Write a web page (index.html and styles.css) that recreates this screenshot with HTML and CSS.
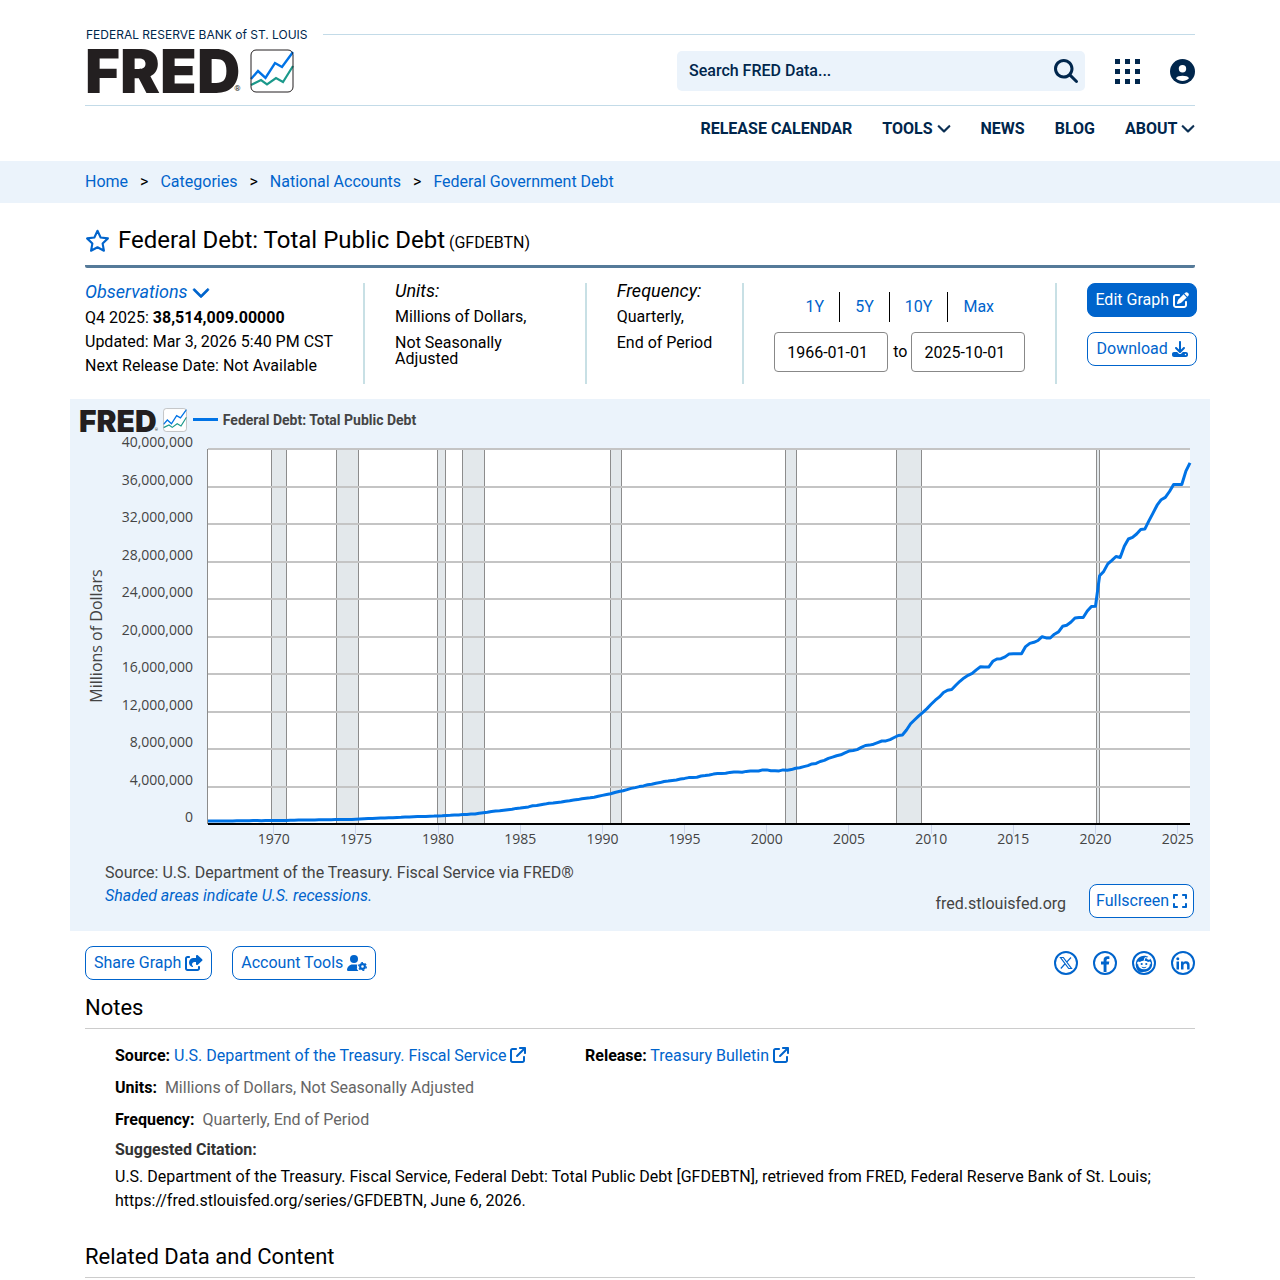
FILE: index.html
```html
<!DOCTYPE html>
<html lang="en">
<head>
    <meta charset="UTF-8">
    <meta name="viewport" content="width=device-width, initial-scale=1.0">
    <title>Federal Debt: Total Public Debt (GFDEBTN) | FRED | St. Louis Fed</title>
    <link rel="stylesheet" href="styles.css">
</head>
<body>

    <!-- shared icons -->
    <svg class="sprite" aria-hidden="true">
        <symbol id="chevron" viewBox="0 0 512 512"><path stroke="currentColor" stroke-width="20" d="M233.4 406.6c12.5 12.5 32.8 12.5 45.3 0l192-192c12.5-12.5 12.5-32.8 0-45.3s-32.8-12.5-45.3 0L256 338.7 86.6 169.4c-12.5-12.5-32.8-12.5-45.3 0s-12.5 32.8 0 45.3l192 192z"/></symbol>
        <symbol id="external" viewBox="0 0 512 512"><path d="M320 0c-17.7 0-32 14.3-32 32s14.3 32 32 32h82.7L201.4 265.4c-12.5 12.5-12.5 32.8 0 45.3s32.8 12.5 45.3 0L448 109.3V192c0 17.7 14.3 32 32 32s32-14.3 32-32V32c0-17.7-14.3-32-32-32H320zM80 32C35.8 32 0 67.8 0 112V432c0 44.2 35.8 80 80 80H400c44.2 0 80-35.8 80-80V320c0-17.7-14.3-32-32-32s-32 14.3-32 32V432c0 8.8-7.2 16-16 16H80c-8.8 0-16-7.2-16-16V112c0-8.8 7.2-16 16-16H192c17.7 0 32-14.3 32-32s-14.3-32-32-32H80z"/></symbol>
        <symbol id="chart-mark" viewBox="0 0 44 44">
            <rect x="1" y="1" width="42" height="42" rx="5" fill="#fff"/>
            <path d="M1 36 L11 31 L17 35.5 L26 29 L33 33 L43 17" fill="none" stroke="#1b998b" stroke-width="2.2"/>
            <path d="M1 30 L8 22 L15.5 29 L25 14 L32 18 L43 3" fill="none" stroke="#0073e6" stroke-width="2.4"/>
            <rect x="1" y="1" width="42" height="42" rx="5" fill="none" stroke="currentColor"/>
        </symbol>
    </svg>

    <header class="container">
        <div class="bank-row">
            <span class="bank-name">FEDERAL RESERVE BANK of ST. LOUIS</span>
            <span class="bank-line"></span>
        </div>
        <div class="brand-row">
            <a class="logo" href="#" aria-label="FRED home">
                <span class="logo-text">FRED</span><span class="logo-reg">®</span>
                <svg class="logo-mark"><use href="#chart-mark"/></svg>
            </a>
            <form class="search">
                <input type="text" placeholder="Search FRED Data..." aria-label="Search FRED Data">
                <button type="button" aria-label="Search">
                    <svg viewBox="0 0 512 512"><path d="M416 208c0 45.9-14.9 88.3-40 122.7L502.6 457.4c12.5 12.5 12.5 32.8 0 45.3s-32.8 12.5-45.3 0L330.7 376c-34.4 25.2-76.8 40-122.7 40C93.1 416 0 322.9 0 208S93.1 0 208 0S416 93.1 416 208zM208 352a144 144 0 1 0 0-288 144 144 0 1 0 0 288z"/></svg>
                </button>
            </form>
            <button class="icon-btn" type="button" aria-label="Apps">
                <svg viewBox="0 0 25 25"><path d="M0 0h5v5H0zM10 0h5v5h-5zM20 0h5v5h-5zM0 10h5v5H0zM10 10h5v5h-5zM20 10h5v5h-5zM0 20h5v5H0zM10 20h5v5h-5zM20 20h5v5h-5z"/></svg>
            </button>
            <button class="icon-btn" type="button" aria-label="My account">
                <svg viewBox="0 0 25 25"><circle cx="12.5" cy="12.5" r="12.5"/><circle cx="12.5" cy="9.8" r="3.7" fill="#fff"/><path d="M6 19.2C7.5 16 17.5 16 19 19.2C15.5 22.8 9.5 22.8 6 19.2z" fill="#fff"/></svg>
            </button>
        </div>
        <nav class="main-nav">
            <a href="#">RELEASE CALENDAR</a>
            <a href="#">TOOLS <svg><use href="#chevron"/></svg></a>
            <a href="#">NEWS</a>
            <a href="#">BLOG</a>
            <a href="#">ABOUT <svg><use href="#chevron"/></svg></a>
        </nav>
    </header>

    <div class="breadcrumb">
        <div class="container">
            <a href="#">Home</a><span>&gt;</span><a href="#">Categories</a><span>&gt;</span><a href="#">National Accounts</a><span>&gt;</span><a href="#">Federal Government Debt</a>
        </div>
    </div>

    <main class="container">
        <div class="title-row">
            <button class="star" type="button" aria-label="Add to favorites">
                <svg viewBox="0 0 24 24"><path d="M12 1.700l3 6.400 7 .9-5.100 4.900 1.300 7L12 17.500l-6.200 3.400 1.300-7L2 9l7-.9z" fill="none" stroke="#0064cc" stroke-width="2" stroke-linejoin="round"/></svg>
            </button>
            <h1>Federal Debt: Total Public Debt <small>(GFDEBTN)</small></h1>
        </div>

        <div class="meta">
            <section class="observations">
                <a class="meta-label" href="#">Observations <svg><use href="#chevron"/></svg></a>
                <p>Q4 2025: <b>38,514,009.00000</b></p>
                <p>Updated: Mar 3, 2026 5:40 PM CST</p>
                <p>Next Release Date: Not Available</p>
            </section>
            <section class="units">
                <div class="meta-label">Units:</div>
                <p>Millions of Dollars,</p>
                <p>Not Seasonally Adjusted</p>
            </section>
            <section class="frequency">
                <div class="meta-label">Frequency:</div>
                <p>Quarterly,</p>
                <p>End of Period</p>
            </section>
            <section class="range">
                <div class="range-links">
                    <a href="#">1Y</a><a href="#">5Y</a><a href="#">10Y</a><a href="#">Max</a>
                </div>
                <div class="range-dates">
                    <input type="text" id="start" value="1966-01-01" aria-label="Start date">
                    <label for="end">to</label>
                    <input type="text" id="end" value="2025-10-01">
                </div>
            </section>
            <section class="actions">
                <button class="btn btn-primary" type="button">Edit Graph
                    <svg viewBox="0 0 512 512"><path d="M471.6 21.7c-21.9-21.9-57.3-21.9-79.2 0L362.3 51.7l97.9 97.9 30.1-30.1c21.9-21.9 21.9-57.3 0-79.2L471.6 21.7zm-299.2 220c-6.1 6.1-10.8 13.6-13.5 21.9l-29.6 88.8c-2.9 8.6-.6 18.1 5.8 24.6s15.9 8.7 24.6 5.8l88.8-29.6c8.2-2.7 15.7-7.4 21.9-13.5L437.7 172.3 339.7 74.3 172.4 241.7zM96 64C43 64 0 107 0 160V416c0 53 43 96 96 96H352c53 0 96-43 96-96V320c0-17.7-14.3-32-32-32s-32 14.3-32 32v96c0 17.7-14.3 32-32 32H96c-17.7 0-32-14.3-32-32V160c0-17.7 14.3-32 32-32h96c17.7 0 32-14.3 32-32s-14.3-32-32-32H96z"/></svg>
                </button>
                <button class="btn" type="button">Download
                    <svg viewBox="0 0 512 512"><path d="M288 32c0-17.7-14.3-32-32-32s-32 14.3-32 32V274.7l-73.4-73.4c-12.5-12.5-32.8-12.5-45.3 0s-12.5 32.8 0 45.3l128 128c12.5 12.5 32.8 12.5 45.3 0l128-128c12.5-12.5 12.5-32.8 0-45.3s-32.8-12.5-45.3 0L288 274.7V32zM64 352c-35.3 0-64 28.7-64 64v32c0 35.3 28.7 64 64 64H448c35.3 0 64-28.7 64-64V416c0-35.3-28.7-64-64-64H346.5l-45.3 45.3c-25 25-65.5 25-90.5 0L165.5 352H64zm368 56a24 24 0 1 1 0 48 24 24 0 1 1 0-48z"/></svg>
                </button>
            </section>
        </div>

        <div class="graph">
            <div class="legend">
                <span class="logo logo-small">
                    <span class="logo-text">FRED</span><span class="logo-reg">®</span>
                    <svg class="logo-mark"><use href="#chart-mark"/></svg>
                </span>
                <span class="legend-line"></span>
                <span class="legend-name">Federal Debt: Total Public Debt</span>
            </div>
            <svg id="chart" class="chart" viewBox="0 0 1140 420" role="img" aria-label="Line chart of total public debt"></svg>
            <div class="graph-footer">
                <div class="graph-source">
                    <p>Source: U.S. Department of the Treasury. Fiscal Service via FRED®</p>
                    <p><a href="#">Shaded areas indicate U.S. recessions.</a></p>
                </div>
                <span class="graph-site">fred.stlouisfed.org</span>
                <button class="btn btn-full" type="button">Fullscreen
                    <svg viewBox="0 0 448 512"><path d="M32 32C14.3 32 0 46.3 0 64v96c0 17.7 14.3 32 32 32s32-14.3 32-32V96h64c17.7 0 32-14.3 32-32s-14.3-32-32-32H32zM64 352c0-17.7-14.3-32-32-32s-32 14.3-32 32v96c0 17.7 14.3 32 32 32h96c17.7 0 32-14.3 32-32s-14.3-32-32-32H64V352zM320 32c-17.7 0-32 14.3-32 32s14.3 32 32 32h64v64c0 17.7 14.3 32 32 32s32-14.3 32-32V64c0-17.7-14.3-32-32-32H320zM448 352c0-17.7-14.3-32-32-32s-32 14.3-32 32v64H320c-17.7 0-32 14.3-32 32s14.3 32 32 32h96c17.7 0 32-14.3 32-32V352z"/></svg>
                </button>
            </div>
        </div>

        <div class="tools">
            <button class="btn" type="button">Share Graph
                <svg class="wide" viewBox="0 0 576 512"><path d="M352 224H305.5c-45 0-81.5 36.5-81.5 81.5c0 22.3 10.3 34.3 19.2 40.5c6.8 4.7 12.8 12 12.8 20.3c0 9.8-8 17.8-17.8 17.8h-2.5c-2.4 0-4.8-.4-7.1-1.4C210.8 374.8 128 333.4 128 240c0-79.5 64.5-144 144-144h80V34.7C352 15.5 367.5 0 386.7 0c8.6 0 16.8 3.2 23.2 8.9L548.1 133.3c7.6 6.8 11.9 16.5 11.9 26.7s-4.3 19.9-11.9 26.7l-139 125.1c-5.9 5.3-13.5 8.2-21.4 8.2H384c-17.7 0-32-14.3-32-32V224zM80 96c-8.8 0-16 7.2-16 16V432c0 8.8 7.2 16 16 16H400c8.8 0 16-7.2 16-16V384c0-17.7 14.3-32 32-32s32 14.3 32 32v48c0 44.2-35.8 80-80 80H80c-44.2 0-80-35.8-80-80V112C0 67.8 35.8 32 80 32h48c17.7 0 32 14.3 32 32s-14.3 32-32 32H80z"/></svg>
            </button>
            <button class="btn" type="button">Account Tools
                <svg class="wider" viewBox="0 0 640 512">
                    <circle cx="224" cy="128" r="128"/>
                    <path d="M178 304h92c22 0 42 4 61 11c-18 24-20 48-6 73c-16 32-10 65 17 88c8 9 15 20 24 36H30c-17 0-30-13-30-30C0 384 80 304 178 304z"/>
                    <circle cx="496" cy="368" r="76" fill="none" stroke="currentColor" stroke-width="68"/>
                    <circle cx="496" cy="368" r="124" fill="none" stroke="currentColor" stroke-width="38" stroke-dasharray="65 64.85"/>
                </svg>
            </button>
            <div class="social">
                <a href="#" aria-label="Share on X"><svg viewBox="0 0 24 24"><circle cx="12" cy="12" r="11"/><path d="M6.500 6.500h2.800l8.200 11h-2.800zM17 6.500l-4.300 4.700M6.800 17.500l4.500-5" stroke-width="1.200"/></svg></a>
                <a href="#" aria-label="Share on Facebook"><svg viewBox="0 0 24 24"><circle cx="12" cy="12" r="11"/><path class="solid" d="M10.600 21v-7.500H8v-3h2.600V9c0-2.600 1.500-3.800 3.800-3.800.9 0 1.600.1 2 .2v2.600h-1.400c-1.200 0-1.500.6-1.500 1.500v1h2.800l-.5 3h-2.300V21z"/></svg></a>
                <a href="#" aria-label="Share on Reddit"><svg viewBox="0 0 24 24"><circle cx="12" cy="12" r="11"/><path class="solid" d="M5 18.500C2 13 4.500 5 12 4.800c2 0 3.500.5 4.800 1.500 4.800 3.500 4.500 11.200-.8 13.800-3 1.300-6 1-9 .6z"/><circle class="hole" cx="16.800" cy="7.200" r="1.600"/><path d="M12 10l1-3.400 3 .6" stroke="#fff" stroke-width="1"/><circle class="hole" cx="6.700" cy="12" r="1.600"/><circle class="hole" cx="17.300" cy="12" r="1.600"/><ellipse class="hole" cx="12" cy="14" rx="5.800" ry="4.200"/><circle class="solid" cx="9.700" cy="13" r="1.100"/><circle class="solid" cx="14.300" cy="13" r="1.100"/><path d="M9.800 16c1.300 1 3.100 1 4.400 0" stroke-width="1"/></svg></a>
                <a href="#" aria-label="Share on LinkedIn"><svg viewBox="0 0 24 24"><circle cx="12" cy="12" r="11"/><path class="solid" d="M5.500 10.500H8v8H5.500zM10 10.500h2.400v1.200c.5-.9 1.500-1.400 2.600-1.400 2.800 0 3.600 1.700 3.600 3.900v4.300h-2.500v-3.900c0-1-.3-2.200-1.600-2.200s-2 1-2 2.100v4H10z"/><circle class="solid" cx="6.800" cy="7.800" r="1.500"/></svg></a>
            </div>
        </div>

        <h2>Notes</h2>
        <div class="notes">
            <div class="notes-row">
                <p><b>Source:</b> <a href="#">U.S. Department of the Treasury. Fiscal Service <svg><use href="#external"/></svg></a></p>
                <p><b>Release:</b> <a href="#">Treasury Bulletin <svg><use href="#external"/></svg></a></p>
            </div>
            <p class="grey"><b>Units:</b>Millions of Dollars, Not Seasonally Adjusted</p>
            <p class="grey"><b>Frequency:</b>Quarterly, End of Period</p>
            <h3>Suggested Citation:</h3>
            <p class="citation">U.S. Department of the Treasury. Fiscal Service, Federal Debt: Total Public Debt [GFDEBTN], retrieved from FRED, Federal Reserve Bank of St. Louis; https://fred.stlouisfed.org/series/GFDEBTN, June 6, 2026.</p>
        </div>

        <h2>Related Data and Content</h2>
    </main>

    <script src="script.js"></script>
</body>
</html>
```
FILE: styles.css
```css
* {
    box-sizing: border-box;
    margin: 0;
    padding: 0;
}

body {
    font-family: Roboto, "Liberation Sans", sans-serif;
    font-size: 16px;
    line-height: 24px;
    color: #000;
    background-color: #fff;
}

a {
    color: #0064cc;
    text-decoration: none;
}

button, input {
    font: inherit;
}

button {
    cursor: pointer;
}

svg {
    fill: currentColor;
}

.sprite {
    display: none;
}

.container {
    max-width: 1140px;
    margin: 0 auto;
    padding: 0 15px;
}

/* Header */
.bank-row {
    display: flex;
    align-items: center;
    gap: 15px;
    padding-top: 28px;
}

.bank-name {
    padding-left: 1px;
    font-family: Inter, sans-serif;
    font-size: 12px;
    font-weight: 400;
    line-height: 13px;
    color: #00264c;
}

.bank-line {
    flex: 1;
    height: 1px;
    background-color: #c3dbe8;
}

.brand-row {
    display: flex;
    align-items: center;
    padding: 8px 0 12px;
    border-bottom: 1px solid #c3dbe8;
    color: #00264c;
}

.logo {
    display: flex;
    align-items: flex-end;
    color: #231f20;
}

.logo-text {
    font-family: Inter, sans-serif;
    font-size: 60px;
    font-weight: 900;
    line-height: 44px;
}

.logo-reg {
    margin-left: -6px;
    font-size: 8px;
    line-height: 8px;
}

.logo-mark {
    width: 44px;
    height: 44px;
    margin-left: 9px;
}

.search {
    display: flex;
    width: 408px;
    height: 40px;
    margin-left: auto;
    border-radius: 5px;
    background-color: #ebf3fb;
}

.search input {
    flex: 1;
    padding: 0 12px;
    border: none;
    background: none;
    outline: none;
}

.search input::placeholder {
    font-weight: 500;
    color: #00264c;
    opacity: 1;
}

.search button {
    padding: 0 7px;
    border: none;
    background: none;
    color: #00264c;
}

.search svg {
    display: block;
    width: 24px;
    height: 24px;
}

.icon-btn {
    margin-left: 30px;
    border: none;
    background: none;
    color: #00264c;
}

.icon-btn svg {
    display: block;
    width: 25px;
    height: 25px;
}

.main-nav {
    display: flex;
    justify-content: flex-end;
    gap: 30px;
    padding: 11px 0 20px;
}

.main-nav a {
    font-weight: 700;
    color: #00264c;
}

.main-nav svg {
    width: 14px;
    height: 14px;
    vertical-align: -1px;
}

/* Breadcrumb */
.breadcrumb {
    padding: 9px 0;
    background-color: #ebf3fb;
}

.breadcrumb span {
    padding: 0 12px;
}

/* Title */
.title-row {
    display: flex;
    align-items: center;
    gap: 8px;
    padding: 22px 0 7px;
    border-bottom: 3px solid #557a99;
    border-radius: 2px;
}

.star {
    border: none;
    background: none;
}

.star svg {
    display: block;
    width: 25px;
    height: 25px;
}

h1 {
    font-size: 24px;
    font-weight: 400;
    line-height: 30px;
}

h1 small {
    margin-left: -2px;
    font-size: 16px;
}

/* Series details */
.meta {
    display: flex;
    margin-right: -2px;
    padding: 15px 0;
}

.meta section {
    min-height: 101px;
    margin-right: 30px;
    padding-right: 30px;
    border-right: 2px solid #c8e0e5;
}

.meta .actions {
    margin-right: 0;
    padding-right: 0;
    border-right: none;
}

.meta-label {
    display: block;
    font-size: 18px;
    font-style: italic;
    line-height: 16px;
}

.observations .meta-label {
    line-height: 18px;
    margin-bottom: 5px;
}

.observations svg {
    width: 18px;
    height: 18px;
    vertical-align: -3px;
}

.units {
    flex: 1;
}

.units p, .frequency p {
    margin-top: 10px;
    line-height: 16px;
}

.range-links {
    display: flex;
    justify-content: center;
    padding: 9px 0 10px;
}

.range-links a {
    padding: 0 15px;
    line-height: 30px;
}

.range-links a + a {
    border-left: 1px solid #000;
}

.range-dates {
    display: flex;
    align-items: center;
}

.range-dates label {
    padding: 0 4px 0 5px;
}

.range-dates input {
    width: 114px;
    height: 40px;
    padding: 0 12px;
    border: 1px solid #888;
    border-radius: 4px;
}

.actions {
    display: flex;
    flex-direction: column;
    gap: 15px;
}

.btn {
    display: flex;
    align-items: center;
    justify-content: center;
    gap: 4px;
    height: 34px;
    padding: 0 8px;
    border: 1px solid #0064cc;
    border-radius: 8px;
    background-color: #fff;
    color: #0064cc;
}

.btn svg {
    width: 16px;
    height: 16px;
}

.btn svg.wide {
    width: 18px;
}

.btn svg.wider {
    width: 20px;
}

.actions .btn {
    padding: 0 7px;
}

.btn-primary {
    background-color: #0064cc;
    color: #fff;
}

/* Graph */
.graph {
    margin: 0 -15px;
    background-color: #ebf3fb;
    color: #444;
}

.legend {
    display: flex;
    align-items: center;
    height: 34px;
    padding: 7px 9px 0;
}

.logo-small .logo-text {
    font-size: 30px;
    line-height: 22px;
}

.logo-small .logo-reg {
    margin-left: -2px;
    font-size: 4px;
    line-height: 4px;
}

.logo-small .logo-mark {
    width: 24px;
    height: 24px;
    margin-left: 5px;
    color: #999;
}

.legend-line {
    width: 25px;
    height: 3px;
    margin: 0 5px 0 6px;
    background-color: #0073e6;
}

.legend-name {
    font-size: 14px;
    font-weight: 700;
}

.chart {
    display: block;
    width: 100%;
    font-family: "Open Sans", sans-serif;
    font-size: 14px;
}

.chart .plot {
    fill: #fff;
}

.chart .recession {
    fill: #e3e8eb;
    stroke: #8c8c8c;
}

.chart .grid {
    stroke: #c4c4c4;
    stroke-width: 2;
}

.chart .axis {
    stroke: #000;
    stroke-width: 2;
}

.chart .side {
    stroke: #8c8c8c;
}

.chart .tick {
    stroke: #ccd6eb;
}

.chart .series {
    fill: none;
    stroke: #0073e6;
    stroke-width: 3;
    stroke-linejoin: round;
}

.chart .y-label {
    text-anchor: end;
}

.chart .x-label {
    text-anchor: middle;
}

.chart .y-title {
    font-size: 16px;
    text-anchor: middle;
}

.graph-footer {
    display: flex;
    align-items: flex-end;
    padding: 8px 16px 13px 35px;
}

.graph-source {
    flex: 1;
    padding-bottom: 11px;
    line-height: 23px;
}

.graph-source a {
    font-style: italic;
}

.graph-site {
    margin-right: 23px;
    padding-bottom: 2px;
}

.btn-full {
    padding: 0 6px;
}

.graph-footer .btn-full svg {
    width: 14px;
}

/* Sharing */
.tools {
    display: flex;
    align-items: center;
    gap: 20px;
    padding: 15px 0 13px;
}

.social {
    display: flex;
    gap: 15px;
    margin-left: auto;
}

.social svg {
    display: block;
    width: 24px;
    height: 24px;
    fill: none;
    stroke: #0064cc;
    stroke-width: 2;
}

.social .solid {
    fill: #0064cc;
    stroke: none;
}

.social .hole {
    fill: #fff;
    stroke: none;
}

/* Notes */
h2 {
    padding-bottom: 5px;
    border-bottom: 1px solid #ccc;
    font-size: 22px;
    font-weight: 400;
    line-height: 30px;
}

.notes {
    padding: 11px 30px 29px;
    line-height: 32px;
}

.notes-row {
    display: grid;
    grid-template-columns: 470px 1fr;
}

.notes svg {
    width: 16px;
    height: 16px;
    vertical-align: -2px;
}

.grey {
    color: #666;
}

.grey b {
    margin-right: 8px;
    color: #000;
}

h3 {
    margin-bottom: 1px;
    font-size: 16px;
    line-height: 28px;
    color: #333;
}

.notes .citation {
    line-height: 24px;
}
```
FILE: script.js
```js
// Total public debt in billions of dollars, one row per two years, from 1966 Q1
const debt = [
    321, 316, 325, 329, 331, 323, 336, 345,
    350, 348, 355, 358, 360, 354, 361, 368,
    372, 371, 379, 389, 392, 397, 412, 424,
    427, 426, 434, 449, 457, 457, 461, 470,
    475, 474, 482, 493, 510, 533, 554, 577,
    601, 620, 635, 654, 669, 674, 699, 719,
    738, 749, 772, 789, 797, 805, 827, 845,
    864, 878, 908, 930, 965, 971, 998, 1029,
    1061, 1080, 1142, 1197, 1245, 1320, 1377, 1411,
    1464, 1513, 1572, 1663, 1711, 1775, 1823, 1946,
    1987, 2059, 2125, 2215, 2247, 2309, 2350, 2432,
    2488, 2548, 2602, 2684, 2741, 2800, 2857, 2953,
    3052, 3144, 3233, 3365, 3465, 3538, 3665, 3802,
    3881, 3985, 4065, 4177, 4231, 4352, 4412, 4536,
    4576, 4646, 4693, 4800, 4864, 4951, 4974, 4989,
    5118, 5161, 5225, 5323, 5381, 5376, 5413, 5502,
    5542, 5548, 5526, 5614, 5652, 5639, 5656, 5776,
    5773, 5686, 5674, 5662, 5774, 5727, 5808, 5943,
    6006, 6127, 6228, 6406, 6461, 6670, 6783, 6998,
    7131, 7274, 7379, 7596, 7777, 7837, 7933, 8170,
    8371, 8420, 8507, 8680, 8850, 8868, 9008, 9229,
    9438, 9492, 10025, 10700, 11127, 11545, 11910, 12311,
    12773, 13202, 13562, 14025, 14270, 14343, 14790, 15223,
    15582, 15856, 16066, 16433, 16772, 16738, 16738, 17352,
    17601, 17633, 17824, 18141, 18152, 18152, 18151, 18922,
    19265, 19382, 19573, 19977, 19846, 19845, 20245, 20493,
    21090, 21195, 21516, 21974, 22028, 22023, 22719, 23201,
    23224, 26477, 26945, 27748, 28133, 28529, 28429, 29617,
    30401, 30569, 30929, 31420, 31458, 32332, 33167, 34001,
    34587, 34832, 35465, 36219, 36214, 36211, 37638, 38514
];

// Start and end of each recession on the x axis
const recessions = [
    [201.5, 216.5], [266.5, 288.5], [367.5, 375.5], [392.5, 414.5],
    [540.5, 551.5], [715.5, 726.5], [826.5, 851.5], [1026.5, 1029.5]
];

const left = 138, right = 1120, top_ = 16, bottom = 391;
const quarter = (right - left) / (debt.length - 1);
const y = value => bottom - value * (bottom - top_) / 40000;

let out = `<rect class="plot" x="${left}" y="${top_}" width="${right - left}" height="${bottom - top_}"/>`;

recessions.forEach(([a, b]) => {
    out += `<rect class="recession" x="${a}" y="${top_}" width="${b - a}" height="${bottom - top_}"/>`;
});

for (let value = 0; value <= 40000; value += 4000) {
    const gy = Math.round(y(value));
    if (value > 0) {
        out += `<line class="grid" x1="${left}" y1="${gy}" x2="${right}" y2="${gy}"/>`;
    }
    out += `<text class="y-label" x="123" y="${gy - 2}">${(value * 1000).toLocaleString('en-US')}</text>`;
}

out += `<line class="side" x1="${left - 0.5}" y1="${top_}" x2="${left - 0.5}" y2="${bottom}"/>`;

for (let year = 1970; year <= 2025; year += 5) {
    const x = left + (year - 1966) * 4 * quarter;
    const tx = Math.floor(x) + 0.5;
    out += `<line class="tick" x1="${tx}" y1="${bottom}" x2="${tx}" y2="${bottom + 10}"/>`;
    out += `<text class="x-label" x="${x}" y="${bottom + 20}">${year}</text>`;
}

const points = debt.map((value, i) => `${(left + i * quarter).toFixed(1)},${y(value).toFixed(1)}`).join(' ');
out += `<polyline class="series" points="${points}"/>`;
out += `<line class="axis" x1="${left}" y1="${bottom}" x2="${right}" y2="${bottom}"/>`;
out += `<text class="y-title" transform="translate(32 203) rotate(-90)">Millions of Dollars</text>`;

document.getElementById('chart').innerHTML = out;
```
